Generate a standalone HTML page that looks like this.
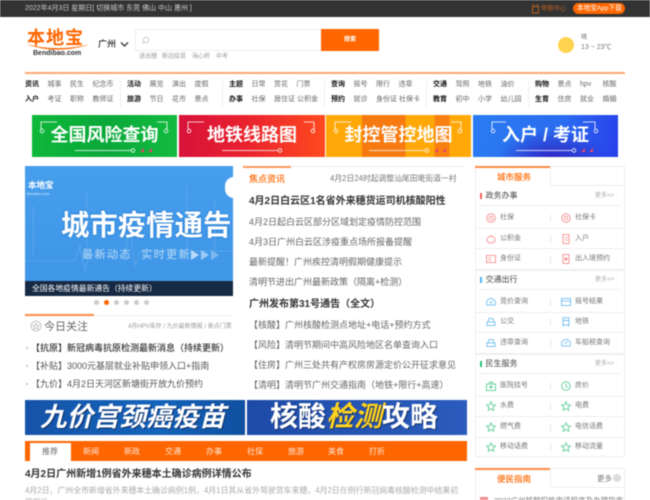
<!DOCTYPE html>
<html lang="zh"><head><meta charset="utf-8"><title>本地宝</title>
<style>
html,body{margin:0;padding:0;background:#fff}
#w{position:relative;width:650px;height:500px;overflow:hidden;background:#fff;font-family:"Liberation Sans","Noto Sans CJK SC",sans-serif;filter:blur(.4px)}
#w *{box-sizing:border-box}
.a{position:absolute}
.t{position:absolute;white-space:nowrap;line-height:12px;height:12px}
.n{font-size:7px;color:#666}
.nb{font-size:7px;color:#111;font-weight:700}
.h{font-size:10px;font-weight:700;color:#333;left:249px}
.l{font-size:9px;color:#666;left:249px}
.s{font-size:7px;color:#777}
.sh{font-size:8px;color:#444;left:485.500px}
.m{font-size:6px;color:#aaa;left:595px}
.ln{position:absolute;left:476px;width:149px;height:1px;background:#eee}
.dv{position:absolute;left:550px;width:1px;height:7px;background:#e4e4e4}
.ds{position:absolute;left:480px;width:140px;border-top:1px dotted #ddd;height:0}
.bn{position:absolute;top:115px;height:42px;overflow:hidden;color:#fff;font-weight:700;text-align:center}
.bn span{position:absolute;left:0;right:0;top:9px;font-size:18px;line-height:22px;white-space:nowrap}
.bn svg{position:absolute;left:0;top:0}
.ic{position:absolute;width:10px;height:10px}
.tb{position:absolute;font-size:8px;line-height:12px;color:#ffe6d5;width:30px;text-align:center}
</style></head><body><div id="w">

<!-- top bar -->
<div class="a" style="left:0;top:0;width:650px;height:17px;background:#333"></div>
<div class="t" style="left:25px;top:3px;font-size:7px;color:#ccc">2022年4月3日 星期日[ 切换城市 东莞 佛山 中山 惠州 ]</div>
<svg class="a" style="left:531px;top:3px" width="9" height="11" viewBox="0 0 9 11"><path d="M1.500 3.500h6v6.500h-6zM3 3.500L2 1M6 3.500L7 1" fill="none" stroke="#b85f1c" stroke-width="1"/></svg>
<div class="t" style="left:541px;top:3px;font-size:6.300px;color:#b85f1c">举报中心</div>
<div class="a" style="left:573px;top:3px;width:52px;height:11px;border-radius:6px;background:#f60"></div>
<div class="t" style="left:577px;top:2.500px;font-size:6.600px;color:#fff">本地宝App下载</div>

<!-- logo -->
<div class="t" style="left:27px;top:28px;height:20px;line-height:20px;font-size:18px;font-weight:700;color:#f60;letter-spacing:1px">本地宝</div>
<svg class="a" style="left:25px;top:43px" width="66" height="9" viewBox="0 0 66 9"><path d="M1 1C20 6.500 45 6.500 65 1C45 8.500 20 8.500 1 1Z" fill="#f60"/></svg>
<div class="t" style="left:33px;top:48px;font-size:7px;font-weight:700;color:#333">Bendibao.com</div>
<div class="t" style="left:98px;top:38px;font-size:9px;color:#222;font-weight:500">广州</div>
<svg class="a" style="left:120px;top:41px" width="9" height="7" viewBox="0 0 9 7"><path d="M1 1.500L4.500 5L8 1.500" fill="none" stroke="#333" stroke-width="1.300"/></svg>

<!-- search -->
<div class="a" style="left:135px;top:29px;width:187px;height:22px;border:1px solid #eee;border-right:0"></div>
<div class="a" style="left:321px;top:29px;width:58px;height:22px;background:#f60"></div>
<div class="t" style="left:344px;top:34px;font-size:6px;font-weight:700;color:#fff">搜索</div>
<svg class="a" style="left:141px;top:36px" width="9" height="9" viewBox="0 0 9 9"><circle cx="5" cy="4" r="2.800" fill="none" stroke="#ccc"/><path d="M3 6L1.500 7.500" stroke="#ccc"/></svg>
<div class="t" style="left:139px;top:51px;font-size:6px;color:#999">进出穗</div>
<div class="t" style="left:162px;top:51px;font-size:6px;color:#999">新冠疫苗</div>
<div class="t" style="left:192px;top:51px;font-size:6px;color:#999">海心桥</div>
<div class="t" style="left:216px;top:51px;font-size:6px;color:#999">中考</div>

<!-- weather -->
<div class="a" style="left:558px;top:37px;width:16px;height:16px;border-radius:50%;background:#ffd24f"></div>
<div class="t" style="left:581px;top:32px;font-size:6px;color:#777">晴</div>
<div class="t" style="left:581px;top:42px;font-size:7px;color:#777">13 ~ 23℃</div>

<div class="a" style="left:25px;top:72px;width:600px;height:2px;background:#ffa873"></div>

<!-- nav -->
<div class="a" style="left:120px;top:81px;width:1px;height:26px;background:#eee"></div>
<div class="a" style="left:222px;top:81px;width:1px;height:26px;background:#eee"></div>
<div class="a" style="left:324px;top:81px;width:1px;height:26px;background:#eee"></div>
<div class="a" style="left:426px;top:81px;width:1px;height:26px;background:#eee"></div>
<div class="a" style="left:528px;top:81px;width:1px;height:26px;background:#eee"></div>

<div class="t nb" style="left:25px;top:79px">资讯</div><div class="t n" style="left:47.500px;top:79px">城事</div><div class="t n" style="left:70px;top:79px">民生</div><div class="t n" style="left:92.500px;top:79px">纪念币</div>
<div class="t nb" style="left:25px;top:94px">入户</div><div class="t n" style="left:47.500px;top:94px">考证</div><div class="t n" style="left:70px;top:94px">职称</div><div class="t n" style="left:92.500px;top:94px">教师证</div>
<div class="t nb" style="left:127px;top:79px">活动</div><div class="t n" style="left:149.500px;top:79px">展览</div><div class="t n" style="left:172px;top:79px">演出</div><div class="t n" style="left:194.500px;top:79px">度假</div>
<div class="t nb" style="left:127px;top:94px">旅游</div><div class="t n" style="left:149.500px;top:94px">节日</div><div class="t n" style="left:172px;top:94px">花市</div><div class="t n" style="left:194.500px;top:94px">景点</div>
<div class="t nb" style="left:229px;top:79px">主题</div><div class="t n" style="left:251.500px;top:79px">日常</div><div class="t n" style="left:274px;top:79px">赏花</div><div class="t n" style="left:296.500px;top:79px">门票</div>
<div class="t nb" style="left:229px;top:94px">办事</div><div class="t n" style="left:251.500px;top:94px">社保</div><div class="t n" style="left:274px;top:94px">居住证</div><div class="t n" style="left:297px;top:94px">公积金</div>
<div class="t nb" style="left:331px;top:79px">查询</div><div class="t n" style="left:353.500px;top:79px">摇号</div><div class="t n" style="left:376px;top:79px">限行</div><div class="t n" style="left:398.500px;top:79px">违章</div>
<div class="t nb" style="left:331px;top:94px">预约</div><div class="t n" style="left:353.500px;top:94px">就诊</div><div class="t n" style="left:376px;top:94px">身份证</div><div class="t n" style="left:399px;top:94px">社保卡</div>
<div class="t nb" style="left:433px;top:79px">交通</div><div class="t n" style="left:455.500px;top:79px">驾照</div><div class="t n" style="left:478px;top:79px">地铁</div><div class="t n" style="left:500.500px;top:79px">油价</div>
<div class="t nb" style="left:433px;top:94px">教育</div><div class="t n" style="left:455.500px;top:94px">初中</div><div class="t n" style="left:478px;top:94px">小学</div><div class="t n" style="left:500.500px;top:94px">幼儿园</div>
<div class="t nb" style="left:535px;top:79px">购物</div><div class="t n" style="left:557.500px;top:79px">景点</div><div class="t n" style="left:580px;top:79px">hpv</div><div class="t n" style="left:602.500px;top:79px">核酸</div>
<div class="t nb" style="left:535px;top:94px">生育</div><div class="t n" style="left:557.500px;top:94px">住房</div><div class="t n" style="left:580px;top:94px">就业</div><div class="t n" style="left:602.500px;top:94px">婚姻</div>

<!-- top banners -->
<div class="bn" style="left:32px;width:145px;background:linear-gradient(90deg,#0fb83a,#0aa83a 50%,#12bb3f)"><span>全国风险查询</span>
<svg width="145" height="42" fill="none" stroke="#fff" stroke-width=".8"><path d="M9 14V7H25M135 14V7H125M43 35.500H99"/><circle cx="10" cy="16" r="1.800"/><circle cx="134" cy="16" r="1.800"/><circle cx="101" cy="35.500" r="1.800"/><path d="M108 37L112 33V37ZM116 37L120 33V37Z" fill="#e8456a" stroke="none"/></svg></div>
<div class="bn" style="left:179px;width:146px;background:linear-gradient(90deg,#d8123a,#e8222e 45%,#ff4a20)"><span>地铁线路图</span>
<svg width="146" height="42" fill="none" stroke="#fff" stroke-width=".8"><path d="M9 14V7H25M135 14V7H125M43 35.500H99"/><circle cx="10" cy="16" r="1.800"/><circle cx="134" cy="16" r="1.800"/><circle cx="101" cy="35.500" r="1.800"/></svg></div>
<div class="bn" style="left:326px;width:145px;background:linear-gradient(90deg,#ffa808 0 25%,#f77a10 25% 55%,#ffa808 55% 75%,#f88010 75% 85%,#ffa808 85%)"><span>封控管控地图</span>
<svg width="145" height="42" fill="none" stroke="#fff" stroke-width=".8"><path d="M9 14V7H25M135 14V7H125M43 35.500H99"/><circle cx="10" cy="16" r="1.800"/><circle cx="134" cy="16" r="1.800"/><circle cx="101" cy="35.500" r="1.800"/><path d="M108 37L112 33V37ZM116 37L120 33V37Z" fill="#e8456a" stroke="none"/></svg></div>
<div class="bn" style="left:473px;width:145px;background:radial-gradient(ellipse at 55% 110%,#2f1fc0 0,transparent 50%),linear-gradient(100deg,#2a7cf2,#2a6cf0 60%,#2840ea)"><span>入户 / 考证</span>
<svg width="145" height="42" fill="none" stroke="#fff" stroke-width=".8"><path d="M19 14V7H33M122 14V7H110M43 35.500H99"/><circle cx="20" cy="16" r="1.800"/><circle cx="123" cy="16" r="1.800"/><circle cx="101" cy="35.500" r="1.800"/><path d="M108 37L112 33V37ZM116 37L120 33V37Z" fill="#e8456a" stroke="none"/></svg></div>

<!-- carousel -->
<div class="a" style="left:25px;top:166px;width:208px;height:130px;background:linear-gradient(180deg,#469eed,#3f95e6);overflow:hidden">
<svg class="a" style="left:0;top:0" width="208" height="115" fill="none" stroke="#7ab8f2" stroke-width="1" opacity=".4"><path d="M0 95H50L55 80L60 105L64 90H100L105 60L110 100L115 85H208"/><path d="M62 90V25M162 90V20M8 90V40M190 90V35"/></svg>
<div class="t" style="left:3px;top:12px;height:14px;line-height:14px;font-size:8.500px;font-weight:700;color:#fff">本地宝</div>
<div class="t" style="left:2px;top:24px;height:8px;line-height:8px;font-size:3.500px;color:#d7ecff">Bendibao.com</div>
<div class="t" style="left:36px;top:42px;height:36px;line-height:36px;font-size:28.400px;font-weight:700;color:#fff;text-shadow:0 0 2px #1d6fc4">城市疫情通告</div>
<div class="t" style="left:57px;top:82px;height:14px;line-height:14px;font-size:11px;color:#b9dbf8;letter-spacing:1.500px">最新动态&nbsp; 实时更新</div>
<svg class="a" style="left:166px;top:83px" width="28" height="12"><path d="M0 1L8 6L0 11Z" fill="#b9dbf8"/><path d="M10 1L18 6L10 11Z" fill="#9acbf5"/><path d="M20 1L28 6L20 11Z" fill="#7db9f1"/></svg>
<div class="a" style="left:0;top:115px;width:208px;height:15px;background:#172a44"></div>
<div class="t" style="left:7px;top:116.500px;font-size:7.800px;color:#fff">全国各地疫情最新通告（持续更新）</div>
</div>
<div class="a" style="left:233px;top:166px;width:12px;height:130px;background:#fff"></div>
<div class="a" style="left:225px;top:177px;width:9px;height:21px;border-radius:10px 0 0 10px;background:#fff"></div>

<div class="a" style="left:94px;top:300px;width:5px;height:5px;border-radius:50%;background:#ccc"></div>
<div class="a" style="left:104px;top:300px;width:5px;height:5px;border-radius:50%;background:#f60"></div>
<div class="a" style="left:114px;top:300px;width:5px;height:5px;border-radius:50%;background:#ccc"></div>
<div class="a" style="left:124px;top:300px;width:5px;height:5px;border-radius:50%;background:#ccc"></div>
<div class="a" style="left:134px;top:300px;width:5px;height:5px;border-radius:50%;background:#ccc"></div>
<div class="a" style="left:144px;top:300px;width:5px;height:5px;border-radius:50%;background:#ccc"></div>

<!-- news -->
<div class="a" style="left:243px;top:166px;width:222px;height:1px;background:#eee"></div>
<div class="a" style="left:243px;top:166px;width:48px;height:1.500px;background:#ff9a5c"></div>
<div class="t" style="left:249px;top:173px;font-size:9px;color:#f60;font-weight:500">焦点资讯</div>
<div class="t" style="left:330px;top:172.500px;font-size:7.800px;color:#777">4月2日24时起调整汕尾田墘街道一村</div>
<div class="t h" style="top:196px">4月2日白云区1名省外来穗货运司机核酸阳性</div>
<div class="t l" style="top:216px">4月2日起白云区部分区域划定疫情防控范围</div>
<div class="t l" style="top:236px">4月3日广州白云区涉疫重点场所报备提醒</div>
<div class="t l" style="top:256px">最新提醒！广州疾控清明假期健康提示</div>
<div class="t l" style="top:276px">清明节进出广州最新政策（隔离+检测）</div>
<div class="t h" style="top:299px">广州发布第31号通告（全文）</div>
<div class="t l" style="top:319px">【核酸】广州核酸检测点地址+电话+预约方式</div>
<div class="t l" style="top:339px">【风险】清明节期间中高风险地区名单查询入口</div>
<div class="t l" style="top:359px">【住房】广州三处共有产权房房源定价公开征求意见</div>
<div class="t l" style="top:379px">【清明】清明节广州交通指南（地铁+限行+高速）</div>

<!-- today -->
<div class="a" style="left:25px;top:314.500px;width:208px;height:1px;background:#eee"></div>
<div class="a" style="left:25px;top:314px;width:69px;height:1.500px;background:#ff8a45"></div>
<svg class="a" style="left:30px;top:320px" width="12" height="12" viewBox="0 0 12 12" fill="none" stroke="#bbb" stroke-width=".8"><circle cx="6" cy="6" r="5"/><path d="M6 3L7 5.300L9 5.500L7.500 7L8 9L6 8L4 9L4.500 7L3 5.500L5 5.300Z"/></svg>
<div class="t" style="left:44px;top:320px;height:14px;line-height:14px;font-size:11px;color:#666">今日关注</div>
<div class="t" style="left:128px;top:321px;font-size:6px;color:#999">4月HPV库存 / 九价最新情报 / 景点门票</div>
<div class="a" style="left:25.500px;top:347px;width:2px;height:2px;background:#ccc"></div>
<div class="a" style="left:25.500px;top:365px;width:2px;height:2px;background:#ccc"></div>
<div class="a" style="left:25.500px;top:383px;width:2px;height:2px;background:#ccc"></div>
<div class="t" style="left:31px;top:342px;font-size:9px;color:#333;font-weight:500">【抗原】新冠病毒抗原检测最新消息（持续更新）</div>
<div class="t" style="left:31px;top:360px;font-size:9px;color:#555">【补贴】3000元基层就业补贴申领入口+指南</div>
<div class="t" style="left:31px;top:378px;font-size:9px;color:#555">【九价】4月2日天河区新塘街开放九价预约</div>

<!-- mid banners -->
<div class="a" style="left:25px;top:400px;width:220px;height:35px;background:linear-gradient(90deg,#1553a8,#1464bb 60%,#0f4f9f);overflow:hidden">
<div class="t" style="left:15px;top:2px;height:30px;line-height:30px;font-size:26.500px;font-weight:700;font-style:italic;color:#fff;text-shadow:1px 1px 0 #0b2f6b">九价宫颈癌疫苗</div></div>
<div class="a" style="left:247px;top:400px;width:220px;height:35px;background:linear-gradient(90deg,#1e4ba8,#2b5cbd);overflow:hidden">
<div class="t" style="left:23px;top:2px;height:30px;line-height:30px;font-size:28px;font-weight:700;color:#fff;text-shadow:1px 1px 0 #12306f">核酸<span style="color:#ffd21e;font-style:italic">检测</span>攻略</div></div>

<!-- tabs -->
<div class="a" style="left:25px;top:441px;width:442px;height:20px;background:#f60"></div>
<div class="a" style="left:30px;top:443px;width:41px;height:18px;background:#fff"></div>
<div class="tb" style="left:35px;top:446px;color:#666">推荐</div>
<div class="tb" style="left:76px;top:446px">新闻</div>
<div class="tb" style="left:117px;top:446px">新政</div>
<div class="tb" style="left:158px;top:446px">交通</div>
<div class="tb" style="left:199px;top:446px">办事</div>
<div class="tb" style="left:240px;top:446px">社保</div>
<div class="tb" style="left:281px;top:446px">旅游</div>
<div class="tb" style="left:321px;top:446px">美食</div>
<div class="tb" style="left:362px;top:446px">打折</div>

<div class="t" style="left:25px;top:469px;font-size:10px;font-weight:700;color:#333">4月2日广州新增1例省外来穗本土确诊病例详情公布</div>
<div class="t" style="left:25px;top:485px;font-size:7.900px;color:#aaa">4月2日，广州全市新增省外来穗本土确诊病例1例，4月1日其从省外驾驶货车来穗，4月2日在例行新冠病毒核酸检测中结果初</div>
<div class="t" style="left:25px;top:497px;font-size:7.900px;color:#aaa">筛阳性。</div>

<!-- right panel -->
<div class="a" style="left:475px;top:166px;width:150px;height:291px;border:1px solid #eee"></div>
<div class="a" style="left:475px;top:166px;width:75px;height:1.500px;background:#ff8a45"></div>
<div class="a" style="left:550px;top:167px;width:1px;height:19px;background:#eee"></div>
<div class="a" style="left:551px;top:185px;width:74px;height:1px;background:#eee"></div>
<div class="t" style="left:497px;top:171px;font-size:8.500px;color:#f60;font-weight:500">城市服务</div>

<div class="a" style="left:480px;top:193px;width:2px;height:6px;background:#f0605a"></div>
<div class="t sh" style="top:190px">政务办事</div><div class="t m" style="top:190px">更多&gt;&gt;</div>
<div class="ds" style="top:205px"></div>
<svg class="ic" style="left:486px;top:213px" viewBox="0 0 10 10" fill="none" stroke="#f59a96"><circle cx="5" cy="5" r="4.300"/><circle cx="5" cy="5" r="1.800"/></svg>
<div class="t s" style="left:500px;top:212px">社保</div><div class="dv" style="top:215px"></div>
<svg class="ic" style="left:561px;top:213px" viewBox="0 0 10 10" fill="none" stroke="#f59a96"><circle cx="5" cy="5" r="4.300"/><circle cx="5" cy="5" r="1.800"/></svg>
<div class="t s" style="left:575px;top:212px">社保卡</div>
<div class="ln" style="top:228px"></div>
<svg class="ic" style="left:486px;top:234px" viewBox="0 0 10 10" fill="none" stroke="#f59a96"><path d="M5 2.500C8 2.500 9.300 4.500 9 6C8.600 8 7 9 5 9C3 9 1.400 8 1 6C.7 4.500 2 2.500 5 2.500ZM5 2.500L5.500 .8"/></svg>
<div class="t s" style="left:500px;top:233px">公积金</div><div class="dv" style="top:236px"></div>
<svg class="ic" style="left:561px;top:234px" viewBox="0 0 10 10" fill="none" stroke="#f59a96"><path d="M2 .5H8V9.500H2ZM4 3.500H6.500M4 6H6.500"/></svg>
<div class="t s" style="left:575px;top:233px">入户</div>
<div class="ln" style="top:248px"></div>
<svg class="ic" style="left:486px;top:254px" viewBox="0 0 10 10" fill="none" stroke="#f59a96"><path d="M.5 1.500H9.500V8.500H.5ZM2.500 4H5M2.500 6H5"/></svg>
<div class="t s" style="left:500px;top:253px">身份证</div><div class="dv" style="top:256px"></div>
<svg class="ic" style="left:561px;top:254px" viewBox="0 0 10 10" fill="none" stroke="#f59a96"><path d="M2 .5H8V9.500H2Z"/><rect x="3.500" y="3.500" width="3" height="3" fill="#f59a96" stroke="none"/></svg>
<div class="t s" style="left:575px;top:253px">出入境预约</div>
<div class="a" style="left:475px;top:269px;width:150px;height:2px;background:#eee"></div>

<div class="a" style="left:480px;top:277px;width:2px;height:6px;background:#4db2f0"></div>
<div class="t sh" style="top:274px">交通出行</div><div class="t m" style="top:274px">更多&gt;&gt;</div>
<div class="ds" style="top:289px"></div>
<svg class="ic" style="left:486px;top:297px" viewBox="0 0 10 10" fill="none" stroke="#7cc4f2"><path d="M1 8A4.500 4.500 0 1 1 9 8ZM3.500 5L4.700 6.200L6.800 4"/></svg>
<div class="t s" style="left:500px;top:296px">竞价查询</div><div class="dv" style="top:299px"></div>
<svg class="ic" style="left:561px;top:297px" viewBox="0 0 10 10" fill="none" stroke="#7cc4f2"><path d="M.5 1.500H9.500V8.500H.5ZM.5 4H9.500"/></svg>
<div class="t s" style="left:575px;top:296px">摇号结果</div>
<div class="ln" style="top:312px"></div>
<svg class="ic" style="left:486px;top:317px" viewBox="0 0 10 10" fill="none" stroke="#7cc4f2"><path d="M2 5L3 1.500H7L8 5H9V8.500H1V5ZM2 5H8"/></svg>
<div class="t s" style="left:500px;top:316px">公交</div><div class="dv" style="top:319px"></div>
<svg class="ic" style="left:561px;top:317px" viewBox="0 0 10 10" fill="none" stroke="#7cc4f2"><path d="M2 .8H8V8H2ZM2 3.500H8M3 8L2 9.500M7 8L8 9.500"/></svg>
<div class="t s" style="left:575px;top:316px">地铁</div>
<div class="ln" style="top:332px"></div>
<svg class="ic" style="left:486px;top:338px" viewBox="0 0 10 10" fill="none" stroke="#7cc4f2"><path d="M2 5L3 1.500H7L8 5H9V8.500H1V5ZM2 5H8"/></svg>
<div class="t s" style="left:500px;top:337px">违章查询</div><div class="dv" style="top:340px"></div>
<svg class="ic" style="left:561px;top:338px" viewBox="0 0 10 10" fill="none" stroke="#7cc4f2"><path d="M1 8A4.500 4.500 0 1 1 9 8ZM3.500 6L6.500 3.500"/></svg>
<div class="t s" style="left:575px;top:337px">车船税查询</div>
<div class="a" style="left:475px;top:353px;width:150px;height:2px;background:#eee"></div>

<div class="a" style="left:480px;top:361px;width:2px;height:6px;background:#2cc27a"></div>
<div class="t sh" style="top:358px">民生服务</div><div class="t m" style="top:358px">更多&gt;&gt;</div>
<div class="ds" style="top:373px"></div>
<svg class="ic" style="left:486px;top:381px" viewBox="0 0 10 10" fill="none" stroke="#6fd3a2"><path d="M.5 3H9.500V9.500H.5ZM3.500 3V1H6.500V3"/><circle cx="5" cy="6" r="1" fill="#6fd3a2"/></svg>
<div class="t s" style="left:500px;top:380px">医院挂号</div><div class="dv" style="top:383px"></div>
<svg class="ic" style="left:561px;top:381px" viewBox="0 0 10 10" fill="none" stroke="#6fd3a2"><circle cx="5" cy="5" r="4.300"/><path d="M5 2.500V5.300L7 6.300"/></svg>
<div class="t s" style="left:575px;top:380px">房价</div>
<div class="ln" style="top:396px"></div>
<svg class="ic" style="left:486px;top:401px" viewBox="0 0 10 10" fill="none" stroke="#6fd3a2"><path d="M5 .8L6.300 3.700L9.500 4L7.100 6.100L7.800 9.300L5 7.700L2.200 9.300L2.900 6.100L.5 4L3.700 3.700Z"/></svg>
<div class="t s" style="left:500px;top:400px">水费</div><div class="dv" style="top:403px"></div>
<svg class="ic" style="left:561px;top:401px" viewBox="0 0 10 10" fill="none" stroke="#6fd3a2"><path d="M5 .8L6.300 3.700L9.500 4L7.100 6.100L7.800 9.300L5 7.700L2.200 9.300L2.900 6.100L.5 4L3.700 3.700Z"/></svg>
<div class="t s" style="left:575px;top:400px">电费</div>
<div class="ln" style="top:416px"></div>
<svg class="ic" style="left:486px;top:422px" viewBox="0 0 10 10" fill="none" stroke="#6fd3a2"><path d="M5 .8L6.300 3.700L9.500 4L7.100 6.100L7.800 9.300L5 7.700L2.200 9.300L2.900 6.100L.5 4L3.700 3.700Z"/></svg>
<div class="t s" style="left:500px;top:421px">燃气费</div><div class="dv" style="top:424px"></div>
<svg class="ic" style="left:561px;top:422px" viewBox="0 0 10 10" fill="none" stroke="#6fd3a2"><path d="M5 .8L6.300 3.700L9.500 4L7.100 6.100L7.800 9.300L5 7.700L2.200 9.300L2.900 6.100L.5 4L3.700 3.700Z"/></svg>
<div class="t s" style="left:575px;top:421px">电信话费</div>
<div class="ln" style="top:437px"></div>
<svg class="ic" style="left:486px;top:442px" viewBox="0 0 10 10" fill="none" stroke="#6fd3a2"><path d="M5 .8L6.300 3.700L9.500 4L7.100 6.100L7.800 9.300L5 7.700L2.200 9.300L2.900 6.100L.5 4L3.700 3.700Z"/></svg>
<div class="t s" style="left:500px;top:441px">移动话费</div><div class="dv" style="top:444px"></div>
<svg class="ic" style="left:561px;top:442px" viewBox="0 0 10 10" fill="none" stroke="#6fd3a2"><path d="M5 .8L6.300 3.700L9.500 4L7.100 6.100L7.800 9.300L5 7.700L2.200 9.300L2.900 6.100L.5 4L3.700 3.700Z"/></svg>
<div class="t s" style="left:575px;top:441px">移动流量</div>

<!-- guide -->
<div class="a" style="left:475px;top:468px;width:150px;height:40px;border:1px solid #eee"></div>
<div class="a" style="left:475px;top:468px;width:75px;height:1.500px;background:#ff8a45"></div>
<div class="a" style="left:550px;top:469px;width:1px;height:19px;background:#eee"></div>
<div class="a" style="left:551px;top:487px;width:74px;height:1px;background:#eee"></div>
<div class="t" style="left:497px;top:473px;font-size:8.500px;color:#f60;font-weight:500">便民指南</div>
<div class="t" style="left:597px;top:473px;font-size:7.500px;color:#777">更多</div>
<div class="a" style="left:613px;top:474px;width:8px;height:8px;border-radius:50%;background:#ddd"></div>
<div class="a" style="left:480px;top:497px;width:8px;height:8px;background:#f08c8c"></div>
<div class="t" style="left:494px;top:495px;font-size:7.500px;color:#777">2022广州核酸阳性申请程序及办理指南</div>

</div></body></html>
